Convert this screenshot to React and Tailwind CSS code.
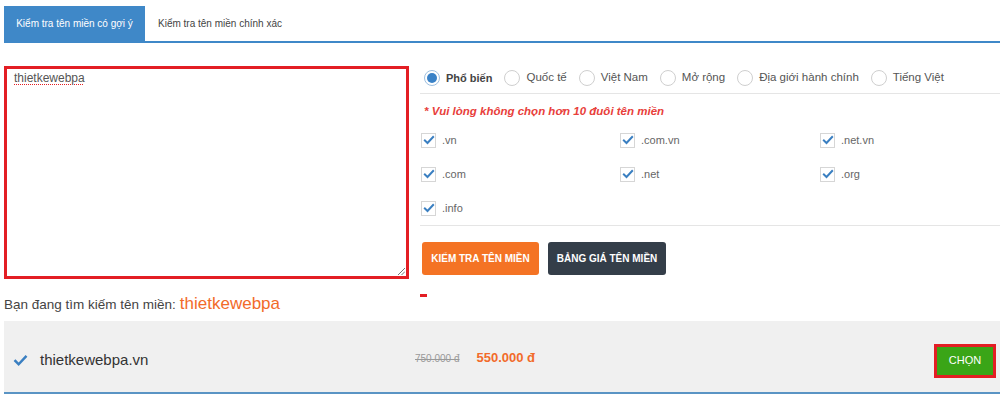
import React from "react";

const font = { fontFamily: '"Liberation Sans", Arial, sans-serif' };

function Check({ className = "" }) {
  return (
    <svg viewBox="0 0 16 16" className={className} fill="none">
      <path d="M2.5 8.5 L6 12 L13.5 4" stroke="currentColor" strokeWidth="2.6" strokeLinecap="square" strokeLinejoin="miter" />
    </svg>
  );
}

function Radio({ active, label }) {
  return (
    <div className="flex items-center gap-[6px] shrink-0 whitespace-nowrap">
      <span className={"w-[16px] h-[16px] rounded-full border flex items-center justify-center " + (active ? "border-[#9ec0e0]" : "border-[#cfcfcf]")}>
        {active && <span className="w-[10px] h-[10px] rounded-full bg-[#3a82c7]" />}
      </span>
      <span className={active ? "text-[11px] font-bold text-[#444]" : "text-[11.5px] text-[#555]"}>{label}</span>
    </div>
  );
}

function Box({ label }) {
  return (
    <div className="flex items-center gap-[6px] h-[16px]">
      <span className="w-[15px] h-[15px] border border-[#d6d6d6] bg-white flex items-center justify-center">
        <Check className="w-[12px] h-[12px] text-[#3a7fc1]" />
      </span>
      <span className="text-[11px] text-[#666]">{label}</span>
    </div>
  );
}

export default function App() {
  return (
    <div className="w-[1000px] h-[395px] bg-white overflow-hidden pl-[4px] pt-[6px]" style={font}>
      {/* tabs */}
      <div className="flex border-b-2 border-[#3f88c8] h-[37px]">
        <div className="bg-[#3f88c8] text-white text-[10px] w-[141px] flex items-center justify-center whitespace-nowrap">Kiểm tra tên miền có gợi ý</div>
        <div className="text-[#444] text-[10px] pl-[13px] flex items-center whitespace-nowrap">Kiểm tra tên miền chính xác</div>
      </div>

      <div className="flex mt-[23px] gap-[11px]">
        <div className="w-[405px] flex flex-col">
          <div className="relative h-[213px] border-[3px] border-[#e31e24] bg-white px-[7px] pt-0 leading-[15px]">
            <span className="text-[12px] text-[#555] underline decoration-dotted decoration-[#e31e24] decoration-[1px] underline-offset-[2px]">thietkewebpa</span>
            <svg className="absolute right-[1px] bottom-[1px] w-[7px] h-[7px]" viewBox="0 0 7 7">
              <path d="M7 0 L0 7 M7 3.5 L3.5 7" stroke="#777" strokeWidth="1" />
            </svg>
          </div>
          <div className="mt-[12px] flex items-baseline gap-[4px] whitespace-nowrap">
            <span className="text-[13.5px] text-[#444]">Bạn đang tìm kiếm tên miền:</span>
            <span className="text-[17px] text-[#f26b2a]">thietkewebpa</span>
          </div>
        </div>

        <div className="flex-1 -mt-[3px]">
          <div className="flex items-center gap-[12px] h-[31px] border-b border-[#e5e5e5] pl-[4px]">
            <Radio active label="Phổ biến" />
            <Radio label="Quốc tế" />
            <Radio label="Việt Nam" />
            <Radio label="Mở rộng" />
            <Radio label="Địa giới hành chính" />
            <Radio label="Tiếng Việt" />
          </div>
          <div className="pl-[4px] mt-[9px] text-[11.5px] font-bold italic text-[#e8403b] whitespace-nowrap">* Vui lòng không chọn hơn 10 đuôi tên miền</div>
          <div className="grid grid-cols-[199px_200px_1fr] gap-y-[18px] mt-[12px] pl-[1px] pb-[9px] border-b border-[#e5e5e5]">
            <Box label=".vn" />
            <Box label=".com.vn" />
            <Box label=".net.vn" />
            <Box label=".com" />
            <Box label=".net" />
            <Box label=".org" />
            <Box label=".info" />
          </div>
          <div className="flex gap-[9px] mt-[16px] pl-[2px]">
            <button className="h-[33px] w-[117px] rounded-[3px] bg-[#f47324] text-white text-[10px] font-bold whitespace-nowrap">KIỂM TRA TÊN MIỀN</button>
            <button className="h-[33px] w-[118px] rounded-[3px] bg-[#343e49] text-white text-[10px] font-bold whitespace-nowrap">BẢNG GIÁ TÊN MIỀN</button>
          </div>
          <div className="w-[7px] h-[3px] bg-[#e31e24] mt-[19px]" />
        </div>
      </div>

      <div className="mt-[4px] h-[73px] pt-[9px] bg-[#f0f0f0] border-b-2 border-[#5a94c4] flex items-center">
        <Check className="ml-[9px] w-[15px] h-[15px] text-[#3a7fc1]" />
        <span className="ml-[12px] text-[15px] text-[#333] w-[375px]">thietkewebpa.vn</span>
        <span className="text-[10px] text-[#999] line-through mb-[5px]">750.000 đ</span>
        <span className="ml-[17px] text-[13px] font-bold text-[#f26b2a] mb-[5px]">550.000 đ</span>
        <div className="flex-1" />
        <button className="mr-[4px] w-[62px] h-[34px] border-[3px] border-[#e31e24] bg-[#3aa517] text-white text-[11px]">CHỌN</button>
      </div>
    </div>
  );
}
